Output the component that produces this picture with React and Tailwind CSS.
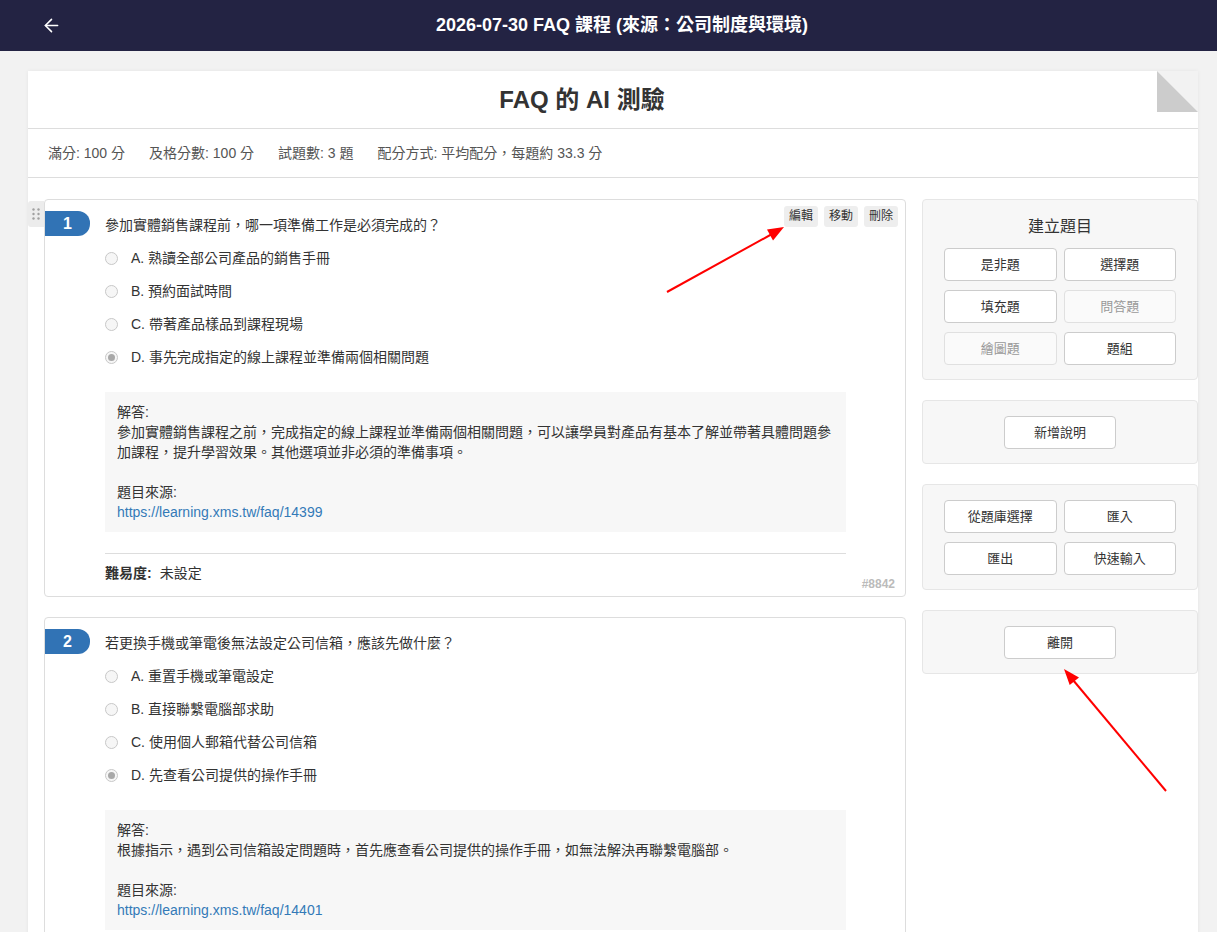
import { ArrowLeft } from "lucide-react";

const font = { fontFamily: '"Liberation Sans", "Noto Sans CJK TC", sans-serif' };

const questions = [
  {
    no: 1,
    id: "#8842",
    title: "參加實體銷售課程前，哪一項準備工作是必須完成的？",
    options: [
      "A. 熟讀全部公司產品的銷售手冊",
      "B. 預約面試時間",
      "C. 帶著產品樣品到課程現場",
      "D. 事先完成指定的線上課程並準備兩個相關問題",
    ],
    answer:
      "參加實體銷售課程之前，完成指定的線上課程並準備兩個相關問題，可以讓學員對產品有基本了解並帶著具體問題參加課程，提升學習效果。其他選項並非必須的準備事項。",
    link: "https://learning.xms.tw/faq/14399",
  },
  {
    no: 2,
    id: "#8843",
    title: "若更換手機或筆電後無法設定公司信箱，應該先做什麼？",
    options: [
      "A. 重置手機或筆電設定",
      "B. 直接聯繫電腦部求助",
      "C. 使用個人郵箱代替公司信箱",
      "D. 先查看公司提供的操作手冊",
    ],
    answer:
      "根據指示，遇到公司信箱設定問題時，首先應查看公司提供的操作手冊，如無法解決再聯繫電腦部。",
    link: "https://learning.xms.tw/faq/14401",
  },
];

function Radio({ checked }) {
  return (
    <span className="w-[13px] h-[13px] rounded-full border border-[#c8c8c8] bg-[#f6f6f6] flex items-center justify-center shrink-0">
      {checked && <span className="w-[7px] h-[7px] rounded-full bg-[#a8a8a8]" />}
    </span>
  );
}

function QuestionCard({ q, hovered }) {
  return (
    <div className="relative border border-[#ddd] rounded-[4px] bg-white pt-[11px] pb-[13px]">
      {hovered && (
        <>
          {/* drag handle */}
          <div className="absolute -left-[17px] top-[1px] w-[16px] h-[26px] bg-[#ececec] rounded-l-[3px] flex items-center justify-center">
            <svg width="8" height="12" viewBox="0 0 8 12">
              {[1.5, 6.5].map((x) =>
                [1.5, 6, 10.5].map((y) => (
                  <circle key={x + "-" + y} cx={x} cy={y} r="1.2" fill="#a0a0a0" />
                ))
              )}
            </svg>
          </div>

          {/* actions */}
          <div className="absolute top-[6px] right-[7px] flex gap-[6px]">
            {["編輯", "移動", "刪除"].map((t) => (
              <button
                key={t}
                className="h-[21px] px-[5px] text-[12px] leading-[21px] bg-[#eeeeee] text-[#333] rounded-[3px]"
              >
                {t}
              </button>
            ))}
          </div>
        </>
      )}

      <div className="flex items-center h-[25px]">
        <div className="w-[45px] h-[25px] bg-[#3173b5] rounded-r-[12px] flex items-center justify-center text-white font-bold text-[16px]">
          {q.no}
        </div>
        <div className="ml-[15px] mt-[3px] text-[14px] text-[#333]">{q.title}</div>
      </div>

      <div className="pl-[60px] pr-[59px]">
        <div className="mt-[6px]">
          {q.options.map((o, i) => (
            <div key={o} className="h-[33px] flex items-center">
              <Radio checked={i === 3} />
              <span className="ml-[13px] text-[14px] text-[#333]">{o}</span>
            </div>
          ))}
        </div>

        <div className="mt-[18px] bg-[#f7f7f7] px-[12px] py-[10px] text-[14px] leading-[20px] text-[#333]">
          <div>解答:</div>
          <div>{q.answer}</div>
          <div className="h-[20px]" />
          <div>題目來源:</div>
          <div className="text-[#337ab7]">{q.link}</div>
        </div>

        <div className="mt-[21px] border-t border-[#ddd] pt-[9px] text-[14px] leading-[20px] text-[#333]">
          <span className="font-bold">難易度:</span>
          <span className="ml-[8px]">未設定</span>
        </div>
      </div>

      <div className="absolute right-[10px] bottom-[5px] text-[12px] leading-[14px] text-[#bbb] font-bold">
        {q.id}
      </div>
    </div>
  );
}

function SideButton({ children, disabled }) {
  return (
    <button
      className={`h-[33px] rounded-[4px] border text-[13px] ${
        disabled
          ? "border-[#e0e0e0] bg-[#fafafa] text-[#999]"
          : "border-[#cccccc] bg-white text-[#333]"
      }`}
    >
      {children}
    </button>
  );
}

function Panel({ children }) {
  return (
    <div className="bg-[#f7f7f7] border border-[#e6e6e6] rounded-[4px] pt-[15px] pb-[14px] px-[21px]">
      {children}
    </div>
  );
}

export default function App() {
  return (
    <div className="relative h-[932px] overflow-hidden bg-[#f2f2f2]" style={font}>
      {/* TOP BAR */}
      <div className="h-[51px] bg-[#232343] flex items-center">
        <div className="w-[70px] pl-[41px] flex items-center">
          <ArrowLeft size={21} color="#fff" strokeWidth={1.8} />
        </div>
        <h1 className="flex-1 text-center text-white font-bold text-[18px]">
          2026-07-30 FAQ 課程 (來源：公司制度與環境)
        </h1>
        <div className="w-[43px]" />
      </div>

      {/* CARD */}
      <div className="relative mt-[20px] ml-[28px] w-[1170px] bg-white shadow-[0_0_4px_rgba(0,0,0,0.06)]">
        <svg className="absolute top-0 right-0" width="41" height="41" viewBox="0 0 41 41">
          <polygon points="0,0 41,0 41,41" fill="#f2f2f2" />
          <polygon points="0,0 0,41 41,41" fill="#cccccc" />
        </svg>

        <div className="h-[58px] border-b border-[#ddd] flex items-center justify-center pr-[62px]">
          <h2 className="text-[24px] font-bold text-[#333]">FAQ 的 AI 測驗</h2>
        </div>

        <div className="h-[49px] border-b border-[#ddd] flex items-center gap-[24px] pl-[20px] text-[14px] text-[#555]">
          <span>滿分: 100 分</span>
          <span>及格分數: 100 分</span>
          <span>試題數: 3 題</span>
          <span>配分方式: 平均配分，每題約 33.3 分</span>
        </div>

        <div className="flex gap-[16px] pl-[16px] pt-[21px] pb-[20px]">
          {/* QUESTIONS */}
          <div className="w-[862px] flex flex-col gap-[20px]">
            {questions.map((q, i) => (
              <QuestionCard key={q.no} q={q} hovered={i === 0} />
            ))}
          </div>

          {/* SIDEBAR */}
          <div className="w-[276px] flex flex-col gap-[20px]">
            <Panel>
              <div className="text-center text-[16px] leading-[24px] text-[#333] mb-[9px]">
                建立題目
              </div>
              <div className="grid grid-cols-2 gap-x-[7px] gap-y-[9px]">
                <SideButton>是非題</SideButton>
                <SideButton>選擇題</SideButton>
                <SideButton>填充題</SideButton>
                <SideButton disabled>問答題</SideButton>
                <SideButton disabled>繪圖題</SideButton>
                <SideButton>題組</SideButton>
              </div>
            </Panel>

            <Panel>
              <div className="flex justify-center">
                <div className="w-[112px] flex flex-col">
                  <SideButton>新增說明</SideButton>
                </div>
              </div>
            </Panel>

            <Panel>
              <div className="grid grid-cols-2 gap-x-[7px] gap-y-[9px]">
                <SideButton>從題庫選擇</SideButton>
                <SideButton>匯入</SideButton>
                <SideButton>匯出</SideButton>
                <SideButton>快速輸入</SideButton>
              </div>
            </Panel>

            <Panel>
              <div className="flex justify-center">
                <div className="w-[112px] flex flex-col">
                  <SideButton>離開</SideButton>
                </div>
              </div>
            </Panel>
          </div>
        </div>
      </div>

      {/* annotation arrows */}
      <svg
        className="absolute top-0 left-0 pointer-events-none"
        width="1217"
        height="932"
        viewBox="0 0 1217 932"
      >
        <line x1="667" y1="292" x2="772" y2="234" stroke="#ff0000" strokeWidth="2" />
        <polygon points="784,227 767,229.6 773,240.5" fill="#ff0000" />
        <line x1="1166" y1="791" x2="1073" y2="680" stroke="#ff0000" strokeWidth="2" />
        <polygon points="1064,669 1079,677.5 1069.7,685.1" fill="#ff0000" />
      </svg>
    </div>
  );
}
